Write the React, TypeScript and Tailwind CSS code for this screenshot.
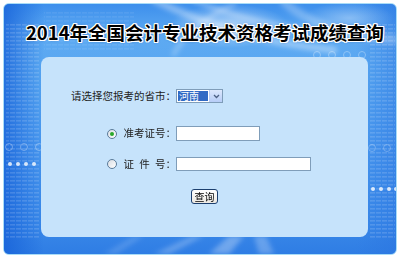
import React from "react";

const cjk = "font-['Noto_Sans_CJK_SC','Noto_Sans',sans-serif]";

const Decor = () => (
  <svg
    className="absolute inset-0 h-full w-full"
    viewBox="0 0 392 250"
    preserveAspectRatio="none"
    aria-hidden
  >
    <defs>
      <pattern id="stripes" width="6" height="4" patternUnits="userSpaceOnUse">
        <rect x="0" y="0" width="5" height="1.6" fill="#ffffff" opacity="0.14" />
      </pattern>
      <linearGradient id="leftShade" x1="0" x2="1" y1="0" y2="0">
        <stop offset="0" stopColor="#1560d8" stopOpacity="0.75" />
        <stop offset="1" stopColor="#1560d8" stopOpacity="0" />
      </linearGradient>
      <linearGradient id="rightShade" x1="1" x2="0" y1="0" y2="0">
        <stop offset="0" stopColor="#2a74e0" stopOpacity="0.5" />
        <stop offset="1" stopColor="#2a74e0" stopOpacity="0" />
      </linearGradient>
      <radialGradient id="glow" cx="0.5" cy="0.5" r="0.5">
        <stop offset="0" stopColor="#ffffff" stopOpacity="0.55" />
        <stop offset="1" stopColor="#ffffff" stopOpacity="0" />
      </radialGradient>
      <filter id="blur" x="-20%" y="-20%" width="140%" height="140%">
        <feGaussianBlur stdDeviation="2.5" />
      </filter>
    </defs>

    {/* side shading */}
    <rect x="0" y="0" width="40" height="250" fill="url(#leftShade)" />
    <rect x="352" y="0" width="40" height="250" fill="url(#rightShade)" />

    {/* horizontal stripes */}
    <rect x="2" y="20" width="34" height="215" fill="url(#stripes)" />
    <rect x="365" y="20" width="26" height="215" fill="url(#stripes)" />
    <rect x="40" y="6" width="90" height="40" fill="url(#stripes)" opacity="0.5" />

    {/* top light waves */}
    <g filter="url(#blur)" fill="none" stroke="#ffffff" strokeLinecap="round">
      <path d="M150 -4 C 200 20, 250 38, 330 46" strokeWidth="7" opacity="0.35" />
      <path d="M190 -4 C 230 14, 280 26, 360 30" strokeWidth="5" opacity="0.3" />
      <path d="M230 0 C 200 14, 180 30, 170 50" strokeWidth="5" opacity="0.25" />
      <path d="M280 -2 C 300 16, 330 30, 390 36" strokeWidth="9" opacity="0.25" />
    </g>
    <ellipse cx="225" cy="22" rx="60" ry="22" fill="url(#glow)" />
    <ellipse cx="345" cy="14" rx="45" ry="16" fill="url(#glow)" opacity="0.6" />

    {/* bottom rays */}
    <g filter="url(#blur)" fill="#ffffff">
      <polygon points="150,250 165,250 200,232 188,232" opacity="0.25" />
      <polygon points="205,250 225,250 240,232 225,232" opacity="0.3" />
      <polygon points="255,250 270,250 262,232 250,232" opacity="0.25" />
      <polygon points="100,250 112,250 140,232 130,232" opacity="0.15" />
    </g>

    {/* circles and dots */}
    <g fill="none" stroke="#ffffff" strokeWidth="0.9" opacity="0.35">
      <circle cx="313" cy="51" r="3.5" />
      <circle cx="328" cy="51" r="3.5" />
      <circle cx="343" cy="51" r="3.5" />
      <circle cx="358" cy="51" r="3.5" />
      <circle cx="368" cy="144" r="3.5" opacity="0.8" />
      <circle cx="383" cy="144" r="3.5" opacity="0.8" />
      <circle cx="5" cy="143" r="3.5" />
      <circle cx="20" cy="143" r="3.5" />
      <circle cx="35" cy="143" r="3.5" />
    </g>
    <g fill="#ffffff" opacity="0.8">
      <circle cx="6" cy="160" r="2" />
      <circle cx="14" cy="160" r="2" />
      <circle cx="22" cy="160" r="2" />
      <circle cx="30" cy="160" r="2" />
      <circle cx="369" cy="185" r="2" />
      <circle cx="377" cy="185" r="2" />
      <circle cx="385" cy="185" r="2" />
      <circle cx="392" cy="185" r="2" />
    </g>
  </svg>
);

const Radio = ({ checked }: { checked?: boolean }) => (
  <span className="flex h-[10px] w-[10px] items-center justify-center rounded-full border border-[#5a7a98] bg-[linear-gradient(135deg,#d8dde3,#ffffff)]">
    {checked && <span className="h-[4px] w-[4px] rounded-full bg-[#2aa82a]" />}
  </span>
);

export default function App() {
  return (
    <div className="h-[258px] w-[400px] bg-white p-[3px]">
      <div className="relative flex h-full flex-col overflow-hidden rounded-[6px] border border-[#a9dcf7] bg-[linear-gradient(180deg,#3d8fec_0%,#5eaaf2_12%,#57a6f1_30%,#4897ee_60%,#3887e8_90%,#2f7de4_100%)]">
        <Decor />

        <h1
          className={`relative pt-[15px] pl-[10px] text-center text-[18.5px] leading-[26px] font-bold text-black ${cjk} [text-shadow:1px_0_0_#fff,-1px_0_0_#fff,0_1px_0_#fff,0_-1px_0_#fff,1px_1px_0_#fff,-1px_-1px_0_#fff,1px_-1px_0_#fff,-1px_1px_0_#fff,0_0_3px_#2b5fa8]`}
        >
          2014年全国会计专业技术资格考试成绩查询
        </h1>

        <div
          className={`relative mt-[12px] ml-[37px] flex h-[180px] w-[327px] flex-col rounded-[8px] bg-[#c6e3fb] pt-[32px] text-[10.5px] leading-none text-[#222] ${cjk}`}
        >
          <div className="flex h-[14px] items-center">
            <span className="w-[135px] text-right">请选择您报考的省市：</span>
            <div className="flex h-[14px] w-[47px] items-stretch border border-[#7f9db9] bg-white">
              <span className="m-[1px] flex w-[30px] items-center bg-[#316ac5] pl-[1px] text-[10px] text-white">
                河南
              </span>
              <span className="ml-auto flex w-[13px] items-center justify-center border-l border-[#b9cdf5] bg-[linear-gradient(180deg,#dce8fd,#b7cdf7)]">
                <svg width="7" height="5" viewBox="0 0 7 5">
                  <path d="M1 1 L3.5 3.5 L6 1" fill="none" stroke="#4d6185" strokeWidth="1.3" />
                </svg>
              </span>
            </div>
          </div>

          <div className="mt-[23px] flex h-[15px] items-center">
            <div className="flex w-[135px] items-center justify-end gap-[7px]">
              <Radio checked />
              <span>准考证号：</span>
            </div>
            <input
              className="h-[15px] w-[84px] border border-[#7f9db9] bg-white outline-none"
              type="text"
            />
          </div>

          <div className="mt-[16px] flex h-[14px] items-center">
            <div className="flex w-[135px] items-center justify-end gap-[7px]">
              <Radio />
              <span className="flex items-center">
                <span className="flex w-[42px] justify-between">
                  <span>证</span>
                  <span>件</span>
                  <span>号</span>
                </span>
                ：
              </span>
            </div>
            <input
              className="h-[14px] w-[135px] border border-[#7f9db9] bg-white outline-none"
              type="text"
            />
          </div>

          <div className="mt-[18px] flex justify-center">
            <button className="flex h-[15px] w-[27px] items-center justify-center rounded-[3px] border border-[#1c3f6e] bg-[linear-gradient(180deg,#ffffff,#ece9e2)] text-[10px] leading-none text-black">
              查询
            </button>
          </div>
        </div>
      </div>
    </div>
  );
}
